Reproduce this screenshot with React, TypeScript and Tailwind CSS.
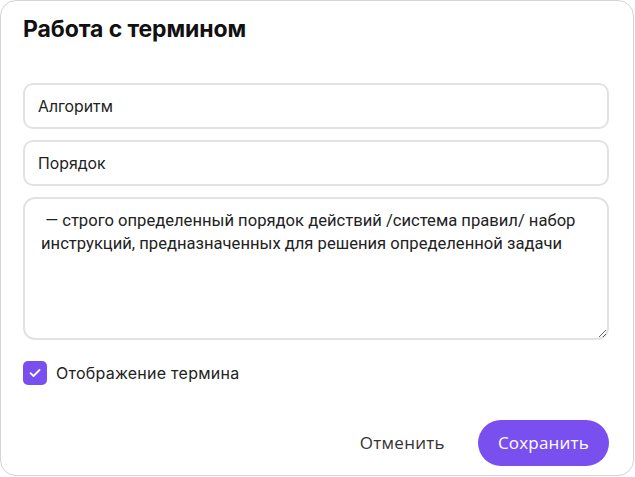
import React, { useState } from 'react';

export default function App() {
  const [term, setTerm] = useState('Алгоритм');
  const [synonym, setSynonym] = useState('Порядок');
  const [definition, setDefinition] = useState(
    ' — строго определенный порядок действий /система правил/ набор инструкций, предназначенных для решения определенной задачи'
  );
  const [visible, setVisible] = useState(true);

  return (
    <div className="w-[635px] h-[477px] bg-white">
      <div className="w-[634px] h-[476px] border border-[#d4d4d4] rounded-[16px] bg-white flex flex-col pl-[22px] pr-[24px] font-['Inter',sans-serif]">
        <h3 className="mt-[13px] text-[23px] leading-[30px] font-bold tracking-[-0.1px] text-[#111]">
          Работа с термином
        </h3>

        <div className="mt-[39px] flex flex-col gap-[11px]">
          <input
            value={term}
            onChange={(e) => setTerm(e.target.value)}
            className="h-[46px] w-full rounded-[10px] border-2 border-[#e2e2e2] px-[13px] text-[15.8px] text-[#222] outline-none"
          />
          <input
            value={synonym}
            onChange={(e) => setSynonym(e.target.value)}
            className="h-[46px] w-full rounded-[10px] border-2 border-[#e2e2e2] px-[13px] text-[15.8px] text-[#222] outline-none"
          />
          <textarea
            value={definition}
            onChange={(e) => setDefinition(e.target.value)}
            className="h-[143px] w-full rounded-[12px] border-2 border-[#e2e2e2] pl-[16px] pr-[8px] pt-[10px] text-[16.6px] leading-[23px] text-[#222] outline-none resize-y font-['Roboto',sans-serif]"
          />
        </div>

        <label className="mt-[21px] flex items-center gap-[9px] cursor-pointer select-none">
          <button
            type="button"
            onClick={() => setVisible(!visible)}
            className={`w-[24px] h-[24px] rounded-[5px] flex items-center justify-center ${visible ? 'bg-[#7a4ff0]' : 'border-2 border-[#ccc] bg-white'}`}
          >
            {visible && (
              <svg width="12" height="10" viewBox="0 0 12 10" fill="none">
                <path d="M1.5 5.2 L4.5 8 L10.5 2" stroke="white" strokeWidth="1.8" strokeLinecap="round" strokeLinejoin="round" />
              </svg>
            )}
          </button>
          <span className="text-[16px] tracking-[0.25px] text-[#222]">Отображение термина</span>
        </label>

        <div className="mt-auto mb-[9px] flex items-center justify-end gap-[33px]">
          <button type="button" className="text-[17px] tracking-[0.3px] text-[#333] font-['Open_Sans',sans-serif]">
            Отменить
          </button>
          <button
            type="button"
            className="h-[46px] px-[20px] rounded-full bg-[#7a4ff0] text-white text-[17px] tracking-[0.2px] font-['Open_Sans',sans-serif] hover:bg-[#6a3fe0] transition-colors"
          >
            Сохранить
          </button>
        </div>
      </div>
    </div>
  );
}
